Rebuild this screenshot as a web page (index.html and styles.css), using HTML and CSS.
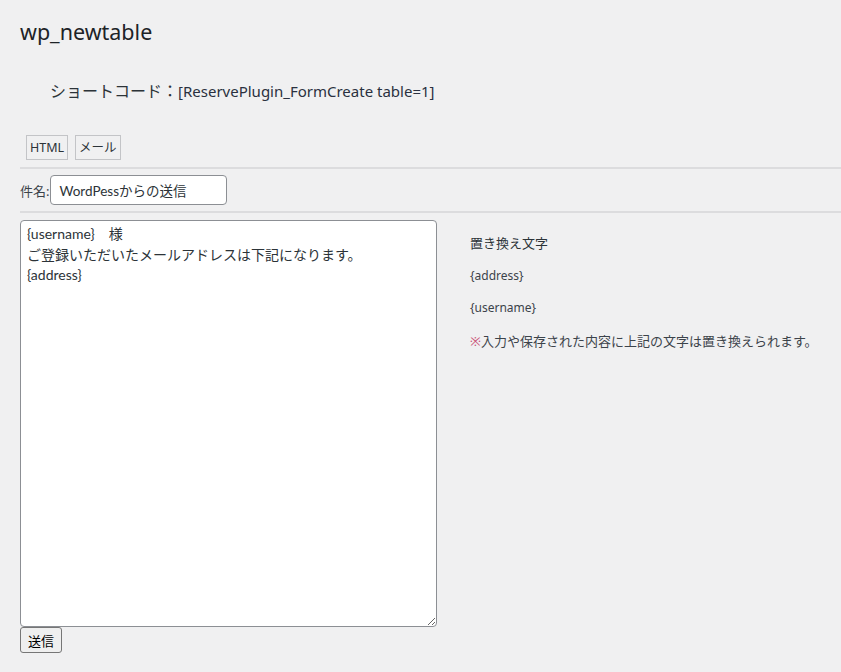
FILE: index.html
```html
<!DOCTYPE html>
<html lang="ja">
<head>
<meta charset="utf-8">
<title>wp_newtable</title>
<link rel="stylesheet" href="styles.css">
</head>
<body>
<div class="wrap">
  <h1 class="title">wp_newtable</h1>
  <p class="shortcode">ショートコード：<span class="code">[ReservePlugin_FormCreate table=1]</span></p>
  <div class="tabs">
    <button class="tab" type="button">HTML</button>
    <button class="tab" type="button">メール</button>
  </div>
  <hr class="sep">
  <div class="subject">
    <label class="subject-label" for="subj">件名:</label>
    <input class="subject-input" id="subj" type="text" value="WordPessからの送信">
  </div>
  <hr class="sep">
  <div class="editor">
    <div class="editor-main">
      <textarea class="body-text">{username}　様
ご登録いただいたメールアドレスは下記になります。
{address}</textarea>
      <button class="submit" type="button">送信</button>
    </div>
    <div class="help">
      <p class="help-title">置き換え文字</p>
      <p class="help-var">{address}</p>
      <p class="help-var">{username}</p>
      <p class="help-note"><span class="mark">※</span>入力や保存された内容に上記の文字は置き換えられます。</p>
    </div>
  </div>
</div>
</body>
</html>
```
FILE: styles.css
```css
html, body {
  margin: 0;
  padding: 0;
  background: #f0f0f1;
}
body {
  font-family: "Noto Sans", "Noto Sans CJK JP", sans-serif;
  font-size: 13px;
  color: #3c434a;
}
.wrap {
  padding: 0 0 0 20px;
}
.title {
  margin: 0;
  padding: 17px 0 0;
  font-size: 21.5px;
  font-weight: 400;
  line-height: 30px;
  color: #1d2327;
}
.shortcode {
  margin: 34px 0 0 30px;
  font-size: 16px;
  line-height: 20px;
  color: #2c3338;
}
.code {
  font-size: 15px;
  color: #2a3140;
}
.tabs {
  display: flex;
  gap: 7px;
  margin: 34px 0 0 6px;
}
.tab {
  box-sizing: border-box;
  font-family: "Noto Sans", "Noto Sans CJK JP", sans-serif;
  font-size: 12.5px;
  line-height: 18px;
  height: 25px;
  padding: 0 3px;
  background: transparent;
  border: 1px solid #c3c4c7;
  border-radius: 0;
  color: #2c3338;
}
.sep {
  margin: 7px 0 0;
  border: 0;
  border-top: 2px solid #dcdcde;
  height: 0;
}
.subject {
  display: flex;
  align-items: center;
  gap: 1px;
  padding: 6px 0 6px;
}
.subject-label {
  font-size: 13px;
  color: #3c434a;
}
.subject-input {
  box-sizing: border-box;
  width: 177px;
  height: 30px;
  padding: 0 8px;
  border: 1px solid #8c8f94;
  border-radius: 4px;
  background: #fff;
  font-family: "Lato", "Noto Sans CJK JP", sans-serif;
  font-size: 13.5px;
  color: #2c3338;
}
.subject + .sep {
  margin-top: 0;
}
.editor {
  display: flex;
  gap: 33px;
  margin-top: 7px;
}
.editor-main {
  display: flex;
  flex-direction: column;
  align-items: flex-start;
}
.body-text {
  box-sizing: border-box;
  width: 417px;
  height: 407px;
  margin: 0;
  padding: 3px 6px;
  border: 1px solid #8c8f94;
  border-radius: 4px;
  background: #fff;
  font-family: "Lato", "Noto Sans CJK JP", sans-serif;
  font-size: 14px;
  line-height: 20.5px;
  color: #2c3338;
  resize: both;
}
.submit {
  box-sizing: border-box;
  height: 26px;
  padding: 0 7px;
  background: #efefef;
  border: 1px solid #767676;
  border-radius: 3px;
  font-family: "Noto Sans", "Noto Sans CJK JP", sans-serif;
  font-size: 13px;
  color: #000;
}
.help {
  padding-top: 13px;
}
.help p {
  margin: 0 0 13px;
  line-height: 20px;
}
.help-title {
  font-size: 13px;
  color: #2c3338;
}
.help-var {
  font-size: 12px;
  color: #3c434a;
}
.help-var + .help-var {
  margin-top: -1px;
}
.help-note {
  font-size: 13px;
  color: #3c434a;
}
.mark {
  color: #c94f75;
}
```
